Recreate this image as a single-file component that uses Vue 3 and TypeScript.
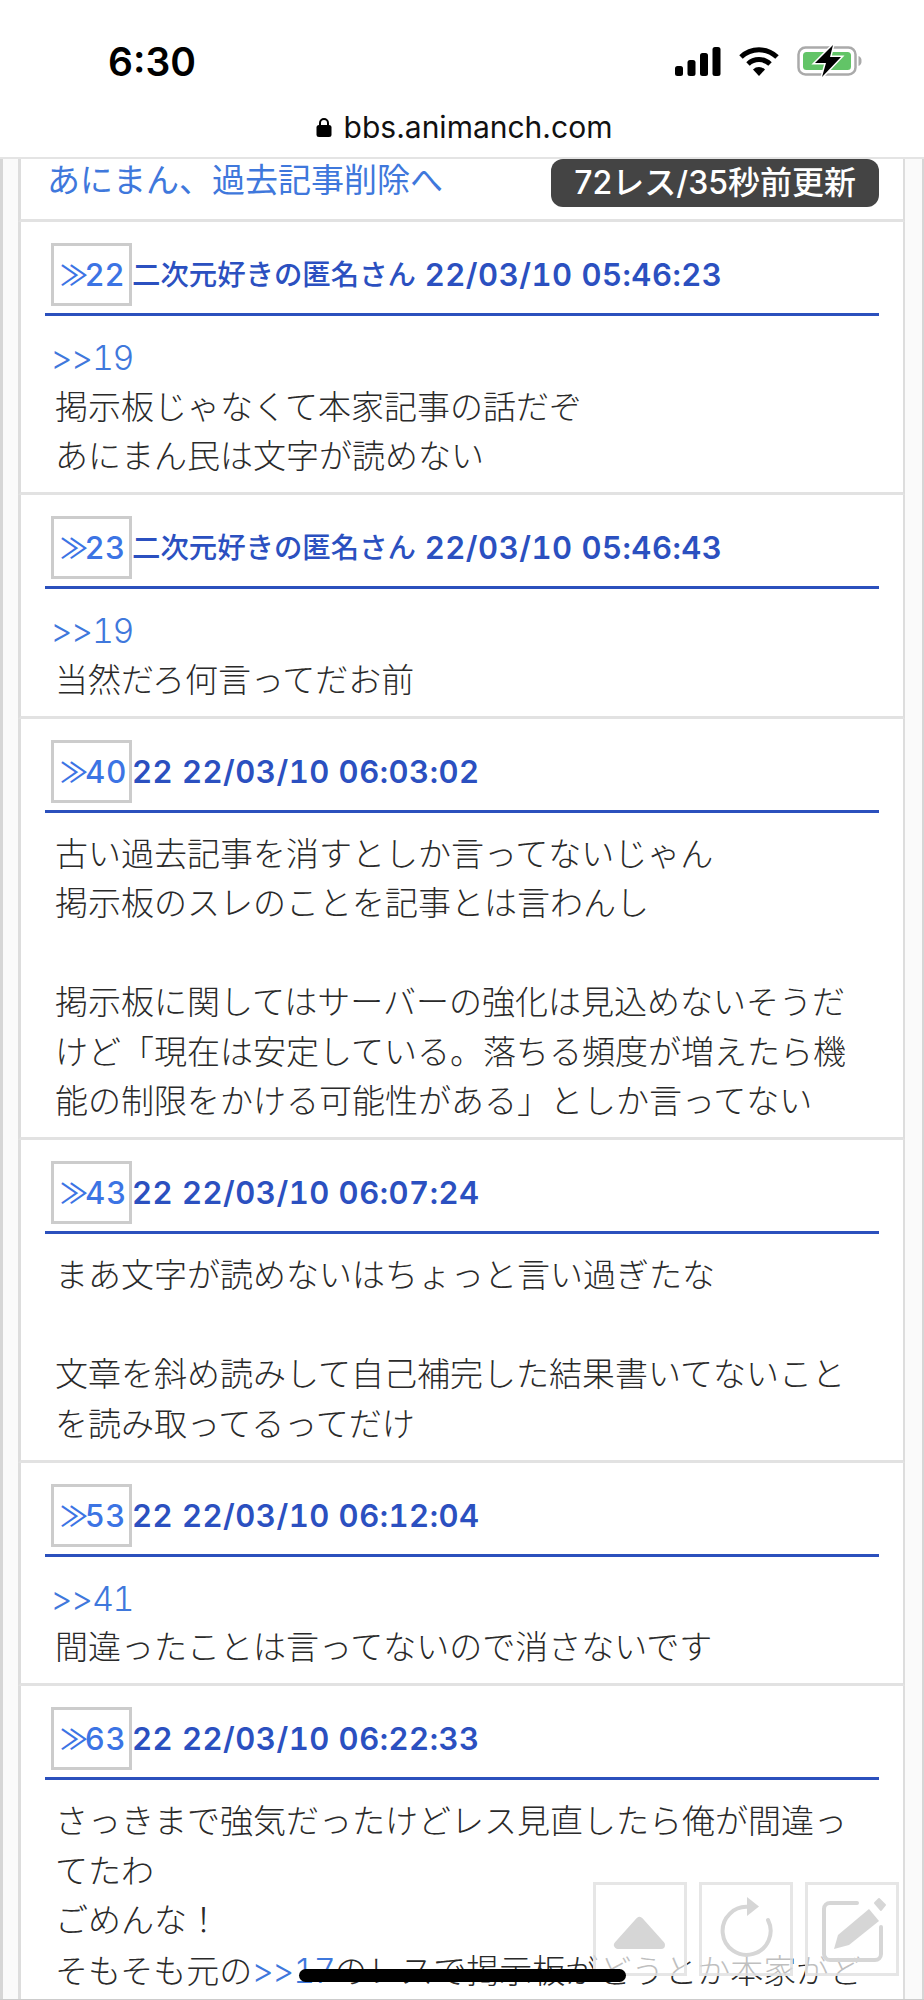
<template>
  <div class="screen">
    <header class="top-bar">
      <div class="status">
        <span class="time">6:30</span>
        <div class="status-icons">
          <svg width="46" height="29" viewBox="0 0 46 29">
            <rect x="0" y="19" width="8" height="10" rx="2.5" />
            <rect x="12.5" y="13" width="8" height="16" rx="2.5" />
            <rect x="25" y="6" width="8" height="23" rx="2.5" />
            <rect x="37.5" y="0" width="8" height="29" rx="2.5" />
          </svg>
          <svg width="40" height="29" viewBox="0 0 40 29">
            <path d="M2 10a26 26 0 0 1 36 0" fill="none" stroke="#000" stroke-width="5" />
            <path d="M9 17a16 16 0 0 1 22 0" fill="none" stroke="#000" stroke-width="5" />
            <path d="M14 22.5a8.5 8.5 0 0 1 12 0L20 29z" />
          </svg>
          <svg width="66" height="32" viewBox="0 0 66 32">
            <rect x="1.5" y="2.5" width="57" height="27" rx="7" fill="none" stroke="#aaa" stroke-width="2.5" />
            <rect x="6" y="7" width="48" height="18" rx="3.5" fill="#62c467" />
            <path d="M61.5 11v10a5 5 0 0 0 3-5 5 5 0 0 0-3-5z" fill="#aaa" />
            <path d="M36 0 18 18h11l-4 14 19-20H33z" stroke="#fff" stroke-width="3" paint-order="stroke" />
          </svg>
        </div>
      </div>
      <div class="address">
        <svg width="16" height="20" viewBox="0 0 16 20">
          <path d="M4 9V6a4 4 0 0 1 8 0v3" fill="none" stroke="#000" stroke-width="2" />
          <rect x="0.5" y="8" width="15" height="12" rx="2.5" />
        </svg>
        <span>bbs.animanch.com</span>
      </div>
    </header>

    <main class="thread">
      <div class="thread-top">
        <a class="thread-title">あにまん、過去記事削除へ</a>
        <span class="badge">72レス/35秒前更新</span>
      </div>

      <article v-for="post in posts" :key="post.no" class="post">
        <div class="post-head">
          <a class="post-no"><span class="quote">≫</span>{{ post.no }}</a>
          <span class="post-name" :class="{ latin: post.name === '22' }">{{ post.name }}</span>
          <span class="post-date">&nbsp;{{ post.date }}</span>
        </div>
        <div class="post-body">
          <p v-for="(line, i) in post.lines" :key="i" class="line">
            <template v-for="(part, j) in splitRefs(line)" :key="j">
              <a v-if="part.startsWith('>>')" class="ref" :class="{ first: j === 0 }">{{ part }}</a>
              <template v-else>{{ part }}</template>
            </template>
          </p>
        </div>
      </article>
    </main>

    <div class="float-buttons">
      <button class="float-btn">
        <svg width="88" height="88" viewBox="0 0 88 88">
          <path d="M43.5 36 22 60h43z" fill="#d6d6d6" stroke="#d6d6d6" stroke-width="8" stroke-linejoin="round" />
        </svg>
      </button>
      <button class="float-btn">
        <svg width="88" height="88" viewBox="0 0 88 88">
          <path d="M47 22A24 24 0 1 0 66 35" fill="none" stroke="#d6d6d6" stroke-width="4" stroke-linecap="round" />
          <path d="M45 12 57 21.5 45 31z" fill="#d6d6d6" />
        </svg>
      </button>
      <button class="float-btn">
        <svg width="88" height="88" viewBox="0 0 88 88">
          <path d="M49 18H22a6 6 0 0 0-6 6V69a6 6 0 0 0 6 6H67a6 6 0 0 0 6-6V42" fill="none" stroke="#d6d6d6" stroke-width="4" stroke-linecap="round" />
          <path d="M26 64 30 50 61 24 71 36 41 60z" fill="#d6d6d6" />
          <path d="M67 18 71 14 77 20 73 25z" fill="#d6d6d6" stroke="#d6d6d6" stroke-width="2" stroke-linejoin="round" />
        </svg>
      </button>
    </div>

    <div class="home-indicator"></div>
  </div>
</template>

<script setup lang="ts">
interface Post {
  no: number
  name: string
  date: string
  lines: string[]
}

const posts: Post[] = [
  {
    no: 22,
    name: '二次元好きの匿名さん',
    date: '22/03/10 05:46:23',
    lines: ['>>19', '掲示板じゃなくて本家記事の話だぞ', 'あにまん民は文字が読めない'],
  },
  {
    no: 23,
    name: '二次元好きの匿名さん',
    date: '22/03/10 05:46:43',
    lines: ['>>19', '当然だろ何言ってだお前'],
  },
  {
    no: 40,
    name: '22',
    date: '22/03/10 06:03:02',
    lines: [
      '古い過去記事を消すとしか言ってないじゃん',
      '掲示板のスレのことを記事とは言わんし',
      '',
      '掲示板に関してはサーバーの強化は見込めないそうだ',
      'けど「現在は安定している。落ちる頻度が増えたら機',
      '能の制限をかける可能性がある」としか言ってない',
    ],
  },
  {
    no: 43,
    name: '22',
    date: '22/03/10 06:07:24',
    lines: [
      'まあ文字が読めないはちょっと言い過ぎたな',
      '',
      '文章を斜め読みして自己補完した結果書いてないこと',
      'を読み取ってるってだけ',
    ],
  },
  {
    no: 53,
    name: '22',
    date: '22/03/10 06:12:04',
    lines: ['>>41', '間違ったことは言ってないので消さないです'],
  },
  {
    no: 63,
    name: '22',
    date: '22/03/10 06:22:33',
    lines: [
      'さっきまで強気だったけどレス見直したら俺が間違っ',
      'てたわ',
      'ごめんな！',
      'そもそも元の>>17のレスで掲示板がどうとか本家がど',
    ],
  },
]

const splitRefs = (line: string): string[] => line.split(/(>>\d+)/).filter(Boolean)
</script>

<style scoped>
.screen {
  position: relative;
  box-sizing: border-box;
  width: 924px;
  height: 2000px;
  overflow: hidden;
  background: #fff;
  border-bottom: 1px solid #ccc;
  font-family: Inter, "Noto Sans CJK JP", sans-serif;
}

.top-bar {
  position: relative;
  z-index: 2;
  height: 157px;
  background: #fff;
  border-bottom: 2px solid #e4e4e4;
}

.status {
  display: flex;
  justify-content: space-between;
  align-items: center;
  height: 60px;
  padding: 31px 61px 0 108px;
}

.time {
  font-size: 39px;
  font-weight: 600;
  color: #000;
}

.status-icons {
  display: flex;
  align-items: center;
  gap: 18px;
}

.address {
  display: flex;
  justify-content: center;
  align-items: center;
  gap: 12px;
  margin-top: 18px;
  padding-left: 4px;
  font-size: 30px;
  color: #111;
}

.thread {
  padding: 0 17px 0 15px;
  background: #fafafa;
  border-left: 3px solid #d6d6d6;
  border-right: 2px solid #d6d6d6;
}

.thread-top {
  display: flex;
  justify-content: space-between;
  align-items: flex-start;
  height: 60px;
  padding: 0 24px 0 26px;
  background: #fff;
  border-left: 3px solid #ddd;
  border-right: 2px solid #ddd;
  border-bottom: 3px solid #e2e2e2;
}

.thread-title {
  margin-top: -3px;
  font-size: 33px;
  line-height: 49px;
  font-weight: 400;
  color: #3f78dc;
}

.badge {
  box-sizing: border-box;
  height: 48px;
  padding: 0 23px;
  border-radius: 12px;
  background: #444;
  color: #fff;
  font-size: 32px;
  font-weight: 500;
  line-height: 48px;
}

.post {
  padding: 21px 24px 10.5px;
  background: #fff;
  border-left: 3px solid #ddd;
  border-right: 2px solid #ddd;
  border-bottom: 3px solid #e2e2e2;
}

.post-head {
  display: flex;
  align-items: flex-start;
  height: 70px;
  padding-left: 6px;
  margin-bottom: 17px;
  border-bottom: 3px solid #2b50bd;
  color: #2b50c0;
  white-space: nowrap;
}

.post-no {
  box-sizing: border-box;
  width: 81px;
  height: 63px;
  padding-left: 6px;
  border: 3px solid #ccc;
  font-size: 31px;
  font-weight: 500;
  line-height: 57px;
  letter-spacing: 1px;
  color: #3c74e4;
}

.quote {
  font-size: 28px;
  font-weight: 500;
  letter-spacing: -3px;
}

.post-name,
.post-date {
  font-size: 28.4px;
  font-weight: 500;
  line-height: 63px;
}

.post-name.latin,
.post-date {
  font-size: 31px;
  font-weight: 600;
  letter-spacing: 0.5px;
  font-variant-numeric: tabular-nums;
}

.post-body {
  padding-left: 10px;
}

.line {
  height: 49.5px;
  margin: 0;
  font-size: 33px;
  line-height: 49.5px;
  font-weight: 300;
  color: #2a2a2a;
  white-space: nowrap;
}

.ref {
  font-size: 34px;
  letter-spacing: -1.5px;
  font-variant-numeric: tabular-nums;
  color: #3f78dc;
}

.ref.first {
  margin-left: -4px;
}

.float-buttons {
  position: absolute;
  top: 1882px;
  left: 593px;
  display: flex;
  gap: 12px;
}

.float-btn {
  display: flex;
  justify-content: center;
  align-items: center;
  box-sizing: border-box;
  width: 94px;
  height: 94px;
  padding: 0;
  background: rgba(255, 255, 255, 0.7);
  border: 3px solid rgba(220, 220, 220, 0.7);
}

.home-indicator {
  position: absolute;
  top: 1969px;
  left: 299px;
  width: 327px;
  height: 13px;
  border-radius: 7px;
  background: #000;
}
</style>
